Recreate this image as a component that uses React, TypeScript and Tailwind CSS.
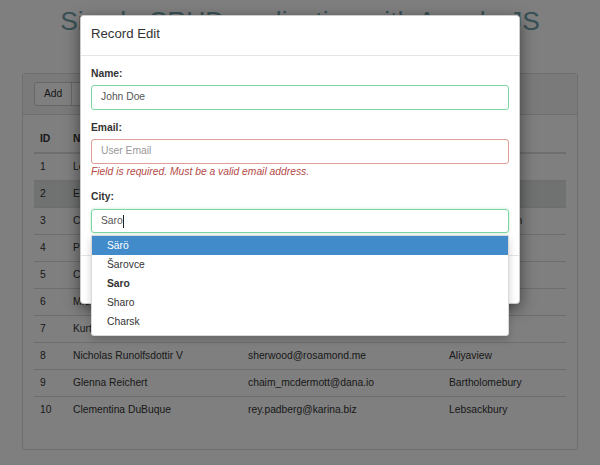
import React from "react";

const rows = [
  ["1", "Leanne Graham", "Sincere@april.biz", "Gwenborough"],
  ["2", "Ervin Howell", "Shanna@melissa.tv", "Wisokyburg"],
  ["3", "Clementine Bauch", "Nathan@yesenia.net", "McKenziehaven"],
  ["4", "Patricia Lebsack", "Julianne.OConner@kory.org", "South Elvis"],
  ["5", "Chelsey Dietrich", "Lucio_Hettinger@annie.ca", "Roscoeview"],
  ["6", "Mrs. Dennis Schulist", "Karley_Dach@jasper.info", "South Christy"],
  ["7", "Kurtis Weissnat", "Telly.Hoeger@billy.biz", "Howemouth"],
  ["8", "Nicholas Runolfsdottir V", "sherwood@rosamond.me", "Aliyaview"],
  ["9", "Glenna Reichert", "chaim_mcdermott@dana.io", "Bartholomebury"],
  ["10", "Clementina DuBuque", "rey.padberg@karina.biz", "Lebsackbury"],
];

const cities = ["Särö", "Šarovce", "Saro", "Sharo", "Charsk"];

export default function App() {
  return (
    <div className="relative w-[600px] h-[465px] overflow-hidden bg-white text-[#333] text-[10.3px] leading-[14.7px] font-['Liberation_Sans',Arial,sans-serif]">
      {/* page */}
      <div className="pt-[7px]">
        <h1 className="text-center text-[26.4px] leading-[29px] font-normal text-[#72a2ac]">
          Simple CRUD application with AngularJS
        </h1>
        <div className="mx-[22px] mt-[37px] border border-[#ddd] rounded-[3px] bg-white">
          <div className="bg-[#f5f5f5] border-b border-[#ddd] rounded-t-[3px] px-[11px] py-[8px] flex">
            <div className="flex">
              <div className="h-[24px] px-[9px] flex items-center border border-[#ccc] bg-white rounded-l-[3px]">Add</div>
              <div className="h-[24px] px-[9px] flex items-center border border-[#ccc] bg-white -ml-px">Edit</div>
              <div className="h-[24px] px-[9px] flex items-center border border-[#ccc] bg-white -ml-px rounded-r-[3px]">Delete</div>
            </div>
          </div>
          <div className="p-[11px]">
            <div className="mb-[15px]">
              <div className="grid grid-cols-[33px_175px_201px_1fr] h-[28px] items-center border-b-2 border-[#ddd] font-bold">
                <div className="px-[6px]">ID</div>
                <div className="px-[6px]">Name</div>
                <div className="px-[6px]">Email</div>
                <div className="px-[6px]">City</div>
              </div>
              {rows.map((r, i) => (
                <div
                  key={r[0]}
                  className={
                    "grid grid-cols-[33px_175px_201px_1fr] items-center " +
                    (i === 0 ? "h-[26px] " : "h-[27px] border-t border-[#ddd] ") +
                    (i === 1 ? "bg-[#dee4e0]" : "")
                  }
                >
                  <div className="px-[6px]">{r[0]}</div>
                  <div className="px-[6px] whitespace-nowrap">{r[1]}</div>
                  <div className="px-[6px] whitespace-nowrap">{r[2]}</div>
                  <div className="px-[6px] whitespace-nowrap">{r[3]}</div>
                </div>
              ))}
            </div>
          </div>
        </div>
      </div>

      {/* backdrop */}
      <div className="absolute inset-0 bg-black/50" />

      {/* modal */}
      <div className="absolute left-[80px] top-[15px] w-[440px] bg-white border border-black/20 rounded-[4px] shadow-[0_5px_15px_rgba(0,0,0,0.5)]">
        <div className="h-[40px] px-[10px] pt-[9px] border-b border-[#e5e5e5]">
          <div className="text-[13.2px] leading-[18px]">Record Edit</div>
        </div>
        <div className="px-[10px] py-[11px]">
          <div className="mb-[11px]">
            <div className="font-bold mb-[3.7px]">Name:</div>
            <div className="h-[24.5px] border border-[#7dd6a1] rounded-[3px] px-[9px] flex items-center text-[#555]">
              John Doe
            </div>
          </div>
          <div className="mb-[11px]">
            <div className="font-bold mb-[3.7px]">Email:</div>
            <div className="h-[24.5px] border border-[#e09c98] rounded-[3px] px-[9px] flex items-center text-[#999]">
              User Email
            </div>
            <div className="mt-[1px] italic text-[#b34a46]">Field is required. Must be a valid email address.</div>
          </div>
          <div className="mb-[11px]">
            <div className="font-bold mb-[3.7px]">City:</div>
            <div className="relative">
              <div className="h-[24.5px] border border-[#7dd6a1] rounded-[3px] px-[9px] flex items-center text-[#555] shadow-[0_0_3px_rgba(125,214,161,0.5)]">
                <span>Saro</span>
                <span className="inline-block w-px h-[13px] bg-[#222] ml-[0.5px]" />
              </div>
              <div className="absolute left-0 right-0 top-full mt-[2px] z-10 bg-white border border-black/15 rounded-b-[3px] pb-[4px] shadow-[0_4px_9px_rgba(0,0,0,0.18)]">
                {cities.map((c, i) => (
                  <div
                    key={c}
                    className={
                      "h-[19px] px-[15px] flex items-center " +
                      (i === 0 ? "bg-[#428bca] text-white" : "text-[#333]") +
                      (i === 2 ? " font-bold" : "")
                    }
                  >
                    {c}
                  </div>
                ))}
              </div>
            </div>
          </div>
        </div>
        <div className="border-t border-[#e5e5e5] px-[10px] py-[11px] flex justify-end gap-[4px]">
          <div className="h-[25px] px-[9px] flex items-center rounded-[3px] bg-[#337ab7] border border-[#2e6da4] text-white">Save</div>
          <div className="h-[25px] px-[9px] flex items-center rounded-[3px] bg-white border border-[#ccc]">Cancel</div>
        </div>
      </div>
    </div>
  );
}
